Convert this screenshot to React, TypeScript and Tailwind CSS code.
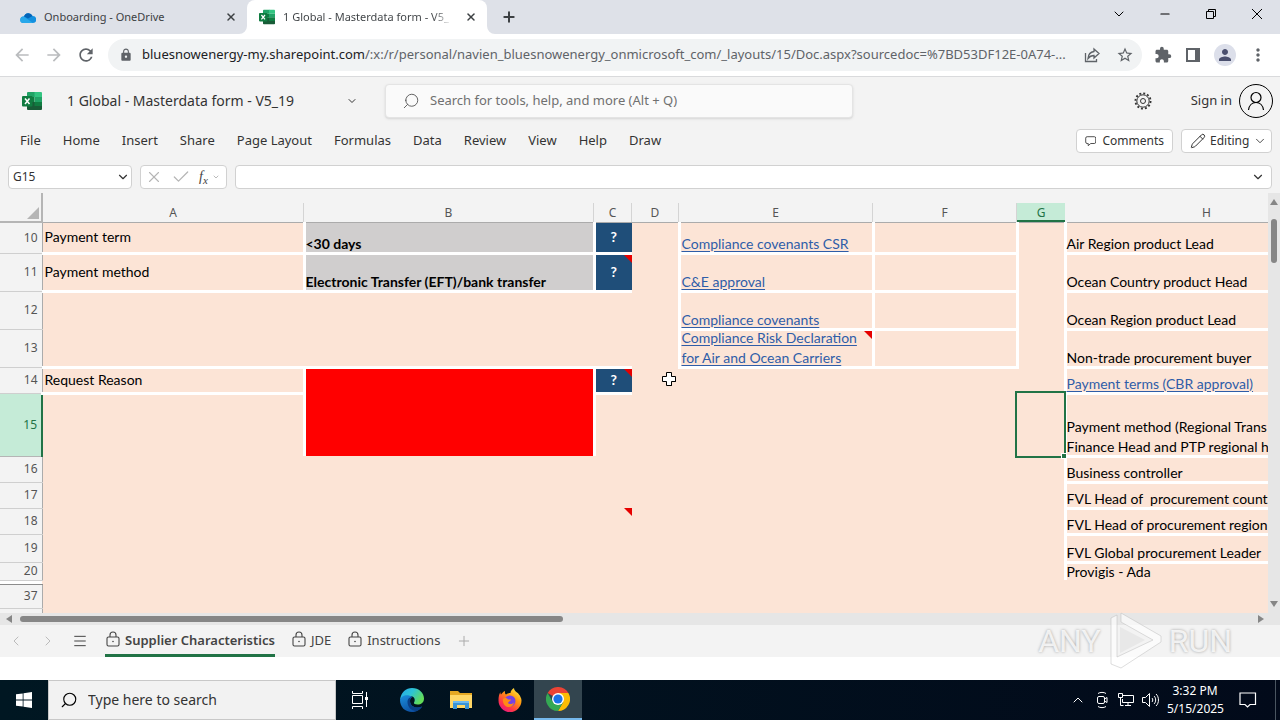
import React, { ReactNode } from "react";
import { ChevronDown, ChevronLeft, ChevronRight, ChevronUp, Menu, Minus, Plus, Search, X, Check, Pencil } from "lucide-react";
import { MdExtension, MdLock, MdMoreVert, MdStarBorder, MdRefresh, MdArrowBack, MdArrowForward, MdPerson } from "react-icons/md";

const ExcelLogo = ({ className }: { className?: string }) => (
  <svg viewBox="0 0 20 18" className={className} xmlns="http://www.w3.org/2000/svg">
    <path d="M6 0h7v5H5V1a1 1 0 0 1 1-1z" fill="#21a366" />
    <path d="M12.500 0H19a1 1 0 0 1 1 1v4h-7.500z" fill="#33c481" />
    <path d="M5 5h7.500v5H5z" fill="#107c41" />
    <path d="M12.500 5H20v5h-7.500z" fill="#21a366" />
    <path d="M5 10h15v7a1 1 0 0 1-1 1H6a1 1 0 0 1-1-1z" fill="#185c37" />
    <path d="M12.500 10H20v4h-7.500z" fill="#107c41" />
    <rect x="0" y="4" width="10.500" height="10.500" rx="1" fill="#107c41" />
    <path d="M3 6.500l4.500 5.500M7.500 6.500L3 12" stroke="#fff" strokeWidth="1.500" />
  </svg>
);

const CloudLogo = () => (
  <svg viewBox="0 0 16 11" className="h-[11px] w-4 shrink-0" xmlns="http://www.w3.org/2000/svg">
    <path d="M4 4.500A4.500 4.500 0 0 1 12.500 4 3.500 3.500 0 0 1 13 11H3.200A3.200 3.200 0 0 1 4 4.500z" fill="#1490df" />
    <path d="M4 4.500A4.500 4.500 0 0 1 12.500 4L8 6.500z" fill="#0364b8" />
    <path d="M3.800 4.500L13 10.900 3.200 11A3.200 3.200 0 0 1 3.800 4.500z" fill="#28a8ea" />
  </svg>
);

const GearIcon = () => (
  <svg viewBox="0 0 18 18" className="size-[18px]" fill="none" stroke="#333" xmlns="http://www.w3.org/2000/svg">
    <circle cx="9" cy="9" r="6.200" />
    <circle cx="9" cy="9" r="2.500" />
    <circle cx="9" cy="9" r="7.600" strokeWidth="1.800" strokeDasharray="1.980 2" />
  </svg>
);

const LockIcon = () => (
  <svg viewBox="0 0 16 16" className="mb-1 size-4" fill="none" stroke="#444" strokeWidth="1.100">
    <rect x="2" y="6" width="12" height="9" rx="1.500" />
    <path d="M5 6V4a3 3 0 0 1 6 0v2" />
    <circle cx="8" cy="10.500" r="0.800" fill="#444" stroke="none" />
  </svg>
);

const CommentIcon = () => (
  <svg viewBox="0 0 16 16" className="size-4" fill="none" stroke="#333" strokeWidth="1.200">
    <path d="M3 2h10a2 2 0 0 1 2 2v5.500a2 2 0 0 1-2 2H8l-3.500 3v-3H3a2 2 0 0 1-2-2V4a2 2 0 0 1 2-2z" />
  </svg>
);

function BrowserTabs() {
  return (
    <div className="flex h-[34px] bg-[#dee1e8] font-['Noto_Sans',sans-serif] text-[11px] text-[#3c4043]">
      <div className="flex w-[247px] items-center pr-2 pl-5">
        <CloudLogo />
        <span className="ml-2 flex-1">Onboarding - OneDrive</span>
        <button aria-label="Close tab" className="p-0.5"><X className="size-3" strokeWidth={3} /></button>
      </div>
      <div className="relative flex w-60 items-center rounded-t-lg bg-white pr-2 pl-3">
        <svg className="absolute bottom-0 -left-2 size-2" viewBox="0 0 8 8"><path d="M8 0v8H0a8 8 0 0 0 8-8z" fill="#fff" /></svg>
        <svg className="absolute -right-2 bottom-0 size-2" viewBox="0 0 8 8"><path d="M0 0v8h8a8 8 0 0 1-8-8z" fill="#fff" /></svg>
        <ExcelLogo className="h-4 w-4 shrink-0" />
        <span className="ml-2 bg-gradient-to-r from-[#3c4043] from-90% to-[#3c4043]/20 bg-clip-text whitespace-nowrap text-transparent">1 Global - Masterdata form - V5_</span>
        <button aria-label="Close tab" className="ml-auto p-0.5"><X className="size-3" strokeWidth={3} /></button>
      </div>
      <button aria-label="New tab" className="ml-2.5 px-1"><Plus className="size-4" strokeWidth={3} /></button>
      <div className="ml-auto flex items-center pb-1.5 text-black">
        <button aria-label="Search tabs" className="flex w-[46px] justify-center"><ChevronDown className="size-4" strokeWidth={1.5} /></button>
        <button aria-label="Minimize" className="flex w-[46px] justify-center"><Minus className="size-3.5" strokeWidth={2} /></button>
        <button aria-label="Restore" className="flex w-[46px] justify-center">
          <svg viewBox="0 0 10 10" className="size-2.5" fill="none" stroke="#000"><path d="M.5 2.500h7v7h-7zM2.500 2.500v-2h7v7h-2" /></svg>
        </button>
        <button aria-label="Close" className="flex w-[46px] justify-center">
          <svg viewBox="0 0 10 10" className="size-2.5" stroke="#000"><path d="M0 0l10 10M10 0L0 10" /></svg>
        </button>
      </div>
    </div>
  );
}

function AddressBar() {
  return (
    <div className="flex h-[43px] items-center border-b border-[#d9dadc] bg-white text-[#5f6368]">
      <div className="flex w-[108px] shrink-0 items-center gap-3 pl-3">
        <button aria-label="Back"><MdArrowBack className="size-5 text-[#babcbe]" /></button>
        <button aria-label="Forward"><MdArrowForward className="size-5 text-[#babcbe]" /></button>
        <button aria-label="Reload"><MdRefresh className="size-5" /></button>
      </div>
      <div className="flex h-8 min-w-0 flex-1 items-center rounded-full bg-[#f1f3f4] pr-2 pl-[11px]">
        <MdLock className="size-3.5 shrink-0" />
        <span className="ml-[9px] flex-1 overflow-hidden font-['Noto_Sans',sans-serif] text-[13px] text-ellipsis whitespace-nowrap">
          <span className="text-[#202124]">bluesnowenergy-my.sharepoint.com</span>/:x:/r/personal/navien_bluesnowenergy_onmicrosoft_com/_layouts/15/Doc.aspx?sourcedoc=%7BD53DF12E-0A74-...
        </span>
        <button aria-label="Share" className="mr-4">
          <svg viewBox="0 0 16 16" className="size-4" fill="none" stroke="#5f6368" strokeWidth="1.300">
            <path d="M1.500 6v8.500h11V12M10 2l5 4.500-5 4.500V8.500c-3 0-4.500 1-6 3 .3-4 2.500-6.500 6-7z" />
          </svg>
        </button>
        <button aria-label="Bookmark"><MdStarBorder className="size-[18px]" /></button>
      </div>
      <div className="flex shrink-0 items-center gap-3 pr-3 pl-3">
        <button aria-label="Extensions"><MdExtension className="size-[18px]" /></button>
        <button aria-label="Side panel" className="px-0.5">
          <svg viewBox="0 0 14 14" className="size-3.5"><path d="M0 0h14v14H0zM2 2v10h7V2z" fill="#5f6368" fillRule="evenodd" /></svg>
        </button>
        <button aria-label="Profile" className="flex size-[22px] items-center justify-center rounded-full bg-[#dcdfea] text-[#4a4f6e]"><MdPerson className="size-[18px]" /></button>
        <button aria-label="Menu"><MdMoreVert className="size-5" /></button>
      </div>
    </div>
  );
}

const MENUS = ["File", "Home", "Insert", "Share", "Page Layout", "Formulas", "Data", "Review", "View", "Help", "Draw"];

function ExcelHeader() {
  return (
    <header className="bg-[#f3f3f3] font-['Noto_Sans',sans-serif] text-[13px] text-[#333]">
      <div className="flex h-12 items-center pr-[7px] pl-[22px]">
        <div className="flex w-[363px] shrink-0 items-center">
          <ExcelLogo className="h-[18px] w-5" />
          <span className="ml-[25px] flex-1 text-sm">1 Global - Masterdata form - V5_19</span>
          <button aria-label="File details" className="mr-[23px] p-1"><ChevronDown className="size-3" strokeWidth={2} /></button>
        </div>
        <label className="flex h-[34px] w-[468px] items-center rounded border border-[#e4e4e4] bg-[#fafafa] pl-4 shadow-sm">
          <Search className="size-[18px] shrink-0 -scale-x-100 text-[#555]" strokeWidth={1.2} />
          <input aria-label="Search" placeholder="Search for tools, help, and more (Alt + Q)" className="ml-2.5 w-full bg-transparent outline-none placeholder:text-[#707070]" />
        </label>
        <button aria-label="Settings" className="ml-auto"><GearIcon /></button>
        <button className="ml-[39px] flex items-center gap-[7px]">
          Sign in
          <span className="flex size-[34px] items-center justify-center rounded-full border border-black">
            <svg viewBox="0 0 18 20" className="h-5 w-[18px]" fill="none" stroke="#000" strokeWidth="1.200">
              <circle cx="9" cy="6.500" r="5" />
              <path d="M1.500 19c.5-4.500 3.500-7.500 7.500-7.500s7 3 7.500 7.500" />
            </svg>
          </span>
        </button>
      </div>
      <div className="flex h-8 items-center pr-2 pl-5">
        <nav className="flex gap-[22px]">
          {MENUS.map((m) => (
            <button key={m} className="whitespace-nowrap">{m}</button>
          ))}
        </nav>
        <div className="ml-auto flex gap-2 text-xs">
          <button className="flex h-6 w-[97px] items-center gap-1.5 rounded border border-[#d1d1d1] bg-white px-2"><CommentIcon />Comments</button>
          <button className="flex h-6 w-[91px] items-center gap-1 rounded border border-[#d1d1d1] bg-white px-2"><Pencil className="size-4 shrink-0" strokeWidth={1.5} />Editing<ChevronDown className="size-3.5 shrink-0" strokeWidth={1.5} /></button>
        </div>
      </div>
      <div className="flex h-9 gap-2 px-2 pt-2 pb-1 text-xs">
        <div className="flex w-[124px] items-center rounded border border-[#d1d1d1] bg-white pr-px pl-1">
          <input aria-label="Name box" defaultValue="G15" className="w-0 flex-1 outline-none" />
          <button aria-label="Names"><ChevronDown className="size-3.5" strokeWidth={2} /></button>
        </div>
        <div className="flex w-[87px] items-center rounded border border-[#d1d1d1] bg-white pl-1 text-[#b5b5b5]">
          <button aria-label="Cancel"><X className="size-[18px]" strokeWidth={1.5} /></button>
          <button aria-label="Enter" className="ml-2"><Check className="size-5" strokeWidth={1.5} /></button>
          <button aria-label="Insert function" className="ml-2 flex items-center font-['Liberation_Serif',serif] text-sm text-[#444] italic">
            f<sub className="text-[11px]">x</sub><ChevronDown className="ml-1 size-2 text-[#999]" />
          </button>
        </div>
        <div className="flex flex-1 items-center rounded border border-[#d1d1d1] bg-white pr-1.5">
          <input aria-label="Formula bar" className="flex-1 px-2 outline-none" />
          <button aria-label="Expand formula bar"><ChevronDown className="size-3.5" strokeWidth={2} /></button>
        </div>
      </div>
    </header>
  );
}

// Corner triangle shown on cells that carry a comment
const Note = () => (
  <svg className="absolute top-0 right-0 size-2" viewBox="0 0 8 8"><path d="M0 0h8v8z" fill="#e60000" /></svg>
);

const Help = ({ note = false }: { note?: boolean }) => (
  <td className="relative border-b-3 border-white bg-[#1f4e79] text-center align-middle font-bold text-white">?{note && <Note />}</td>
);

const RowHead = ({ n, active = false }: { n: string; active?: boolean }) => (
  <th
    scope="row"
    className={
      active
        ? "border-r-2 border-b border-r-[#217346] border-b-[#b5b5b5] bg-[#c5ebd7] pr-1 text-right font-['Noto_Sans',sans-serif] text-xs font-normal text-[#217346]"
        : "border-r border-b border-r-[#ababab] border-b-[#cfcfcf] bg-[#f3f3f3] pr-1 text-right font-['Noto_Sans',sans-serif] text-xs font-normal text-[#555]"
    }
  >
    {n}
  </th>
);

const Label = ({ children }: { children: ReactNode }) => (
  <td className="border-r-3 border-b-3 border-white pl-0.5 align-middle">{children}</td>
);

const Value = ({ children }: { children: ReactNode }) => (
  <td className="border-r-3 border-b-3 border-white bg-[#d0cece] align-bottom font-bold">
    <div className="-mb-0.5">{children}</div>
  </td>
);

const LinkCell = ({ children, note = false }: { children: ReactNode; note?: boolean }) => (
  <td className="relative border-x-3 border-b-3 border-white pl-px align-bottom">
    <a href="#" className="-mt-1 -mb-0.5 block text-[#2f5da8] underline underline-offset-2">{children}</a>
    {note && <Note />}
  </td>
);

const Approver = ({ children }: { children: ReactNode }) => (
  <td className="border-b-3 border-l-3 border-white align-bottom">
    <div className="-mb-0.5 whitespace-nowrap">{children}</div>
  </td>
);

const Blank = () => <td className="border-r-3 border-b-3 border-white" />;

const COLS = ["A", "B", "C", "D", "E", "F", "G", "H"];

function Sheet() {
  return (
    <div className="min-w-0 flex-1 overflow-hidden bg-[#fce4d6]">
      <table className="w-[1349px] table-fixed border-collapse font-[Lato,sans-serif] text-sm leading-5 text-black">
        <colgroup>
          <col className="w-[42px]" />
          <col className="w-[262px]" />
          <col className="w-[290px]" />
          <col className="w-[38px]" />
          <col className="w-[47px]" />
          <col className="w-[194px]" />
          <col className="w-[144px]" />
          <col className="w-12" />
          <col className="w-[284px]" />
        </colgroup>
        <thead>
          <tr className="h-[29px] bg-[#f3f3f3]">
            <th className="border-r-2 border-b-2 border-[#b5b5b5] p-0 align-bottom">
              <svg className="mr-0.5 mb-0.5 ml-auto size-3" viewBox="0 0 12 12"><path d="M12 0v12H0z" fill="#b5b5b5" /></svg>
            </th>
            {COLS.map((c) => (
              <th key={c} scope="col" className="border-b border-[#ababab] p-0 align-bottom font-['Noto_Sans',sans-serif] text-xs font-normal text-[#555]">
                <div className={c === "G" ? "h-[19px] border-b-2 border-[#217346] bg-[#c5ebd7] leading-[19px] text-[#217346]" : "h-[19px] border-r border-[#d4d4d4] leading-[19px]"}>{c}</div>
              </th>
            ))}
          </tr>
        </thead>
        <tbody>
          <tr className="h-[31px]">
            <RowHead n="10" />
            <Label>Payment term</Label>
            <Value>&lt;30 days</Value>
            <Help />
            <td />
            <LinkCell>Compliance covenants CSR</LinkCell>
            <Blank />
            <td />
            <Approver>Air Region product Lead</Approver>
          </tr>
          <tr className="h-[38px]">
            <RowHead n="11" />
            <Label>Payment method</Label>
            <Value>Electronic Transfer (EFT)/bank transfer</Value>
            <Help note />
            <td />
            <LinkCell>C&amp;E approval</LinkCell>
            <Blank />
            <td />
            <Approver>Ocean Country product Head</Approver>
          </tr>
          <tr className="h-[38px]">
            <RowHead n="12" />
            <td colSpan={3} />
            <td />
            <LinkCell>Compliance covenants</LinkCell>
            <Blank />
            <td />
            <Approver>Ocean Region product Lead</Approver>
          </tr>
          <tr className="h-[38px]">
            <RowHead n="13" />
            <td colSpan={3} className="border-b-3 border-white" />
            <td />
            <LinkCell note>Compliance Risk Declaration<br />for Air and Ocean Carriers</LinkCell>
            <Blank />
            <td />
            <Approver>Non-trade procurement buyer</Approver>
          </tr>
          <tr className="h-[26px]">
            <RowHead n="14" />
            <Label>Request Reason</Label>
            <td rowSpan={2} className="border-r-3 border-white bg-[#ff0000]" />
            <Help note />
            <td className="relative">
              <svg className="absolute top-1 right-0.5 size-4" viewBox="0 0 16 16">
                <path d="M6 2h5v4h4v5h-4v4H6v-4H2V6h4z" fill="#000" />
                <path d="M5.500 1.500h5v4h4v5h-4v4h-5v-4h-4v-5h4z" fill="#fff" stroke="#000" />
              </svg>
            </td>
            <td colSpan={2} />
            <td />
            <Approver><a href="#" className="text-[#2f5da8] underline underline-offset-2">Payment terms (CBR approval)</a></Approver>
          </tr>
          <tr className="h-[63px]">
            <RowHead n="15" active />
            <td className="border-r-3 border-white" />
            <td />
            <td />
            <td colSpan={2} />
            <td className="relative">
              <div className="absolute -inset-x-0.5 -inset-y-0.5 z-10 border-2 border-[#217346]">
                <span className="absolute -right-[3px] -bottom-[3px] size-1.5 border border-white bg-[#217346]" />
              </div>
            </td>
            <Approver>Payment method (Regional Trans<br />Finance Head and PTP regional h</Approver>
          </tr>
          <tr className="h-[26px]">
            <RowHead n="16" />
            <td colSpan={7} />
            <Approver>Business controller</Approver>
          </tr>
          <tr className="h-[26px]">
            <RowHead n="17" />
            <td colSpan={7} />
            <Approver>FVL Head of&nbsp; procurement countr</Approver>
          </tr>
          <tr className="h-[26px]">
            <RowHead n="18" />
            <td colSpan={2} />
            <td className="relative"><Note /></td>
            <td colSpan={4} />
            <Approver>FVL Head of procurement region</Approver>
          </tr>
          <tr className="h-7">
            <RowHead n="19" />
            <td colSpan={7} />
            <Approver>FVL Global procurement Leader</Approver>
          </tr>
          <tr className="h-[18px] leading-4">
            <RowHead n="20" />
            <td colSpan={7} />
            <td className="border-l-3 border-white">Provigis - Ada</td>
          </tr>
          {/* hidden rows 21-36 */}
          <tr className="h-1">
            <th className="border-y border-[#8c8c8c] bg-white p-0" />
            <td colSpan={8} />
          </tr>
          <tr className="h-6">
            <RowHead n="37" />
            <td colSpan={8} />
          </tr>
          <tr className="h-5">
            <RowHead n="" />
            <td colSpan={8} />
          </tr>
        </tbody>
      </table>
    </div>
  );
}

function SheetTabs() {
  return (
    <footer className="flex h-8 items-center bg-[#f3f3f3] pl-2 font-['Noto_Sans',sans-serif] text-[13px] text-[#444]">
      <button aria-label="Previous sheet" className="w-8 text-[#bbb]"><ChevronLeft className="size-4" strokeWidth={1.5} /></button>
      <button aria-label="Next sheet" className="w-8 text-[#bbb]"><ChevronRight className="size-4" strokeWidth={1.5} /></button>
      <button aria-label="All sheets" className="w-[33px]"><Menu className="size-4" strokeWidth={1.5} /></button>
      <button className="flex h-8 items-center gap-1 border-b-3 border-[#217346] pt-0.5 font-semibold"><LockIcon />Supplier Characteristics</button>
      <button className="ml-4 flex items-center gap-1"><LockIcon />JDE</button>
      <button className="ml-4 flex items-center gap-1"><LockIcon />Instructions</button>
      <button aria-label="New sheet" className="ml-4"><Plus className="size-4 text-[#aaa]" strokeWidth={1.5} /></button>
    </footer>
  );
}

const EdgeLogo = () => (
  <svg viewBox="0 0 24 24" className="size-6" xmlns="http://www.w3.org/2000/svg">
    <defs>
      <linearGradient id="edgeTop" x1="0" y1="0" x2="1" y2="0.500"><stop offset="0" stopColor="#28a8e8" /><stop offset="0.500" stopColor="#2cc3d6" /><stop offset="1" stopColor="#63dc58" /></linearGradient>
      <linearGradient id="edgeLow" x1="0" y1="0" x2="0.600" y2="1"><stop offset="0" stopColor="#1b8fdd" /><stop offset="1" stopColor="#0c4ea0" /></linearGradient>
    </defs>
    <path d="M0 12C1 4 6 0 12 0c7 0 12 5 12 10.500 0 4-3 6-6.500 6-2.500 0-4-1-3.500-2 1.500-2 1-6.500-4-6.500C5 8 1 10 0 12z" fill="url(#edgeTop)" />
    <path d="M0 12c0 7 5 12 12 12 4 0 8-2 10-5.500-5 2.500-12 .5-12-5.500 0-2 1-3.500 2.500-4C7 5.500 1 8 0 12z" fill="url(#edgeLow)" />
    <path d="M7.500 14c0 5 4 9 9 9 2.500-1 4.500-2.500 5.500-4.500-6 2.500-12 0-12-5.500 0-2 1-3.500 2-4-3 0-4.500 2.500-4.500 5z" fill="#0a3f86" />
  </svg>
);

const ExplorerLogo = () => (
  <svg viewBox="0 0 22 20" className="h-5 w-[22px]" xmlns="http://www.w3.org/2000/svg">
    <path d="M0 1h8l2 2h12v15H0z" fill="#e5a823" />
    <path d="M0 5h22v13H0z" fill="#ffd766" />
    <path d="M3 11h16v8h-4v-4H7v4H3z" fill="#3a94d6" />
    <path d="M3 11h16v2H3z" fill="#6dbaf0" />
  </svg>
);

const FirefoxLogo = () => (
  <svg viewBox="0 0 24 24" className="size-6" xmlns="http://www.w3.org/2000/svg">
    <defs>
      <linearGradient id="fox" x1="0.900" y1="0" x2="0.200" y2="1"><stop offset="0" stopColor="#fff44f" /><stop offset="0.400" stopColor="#ff980e" /><stop offset="0.750" stopColor="#ff3647" /><stop offset="1" stopColor="#e31587" /></linearGradient>
    </defs>
    <path d="M22.500 9c-.8-2-2-3.500-3.500-4.500-2-1.500-3-3-3-4.500-2 1-3.500 3-3.500 5-2 0-3.500.5-4.500 1.500C7 6 6.800 4.500 7 3 5.500 3.500 4 5 3 6.500 2.500 6 2.300 5 2.500 4 1 6 .5 9 .5 12.500a11.500 11.500 0 0 0 23 0c0-1.200-.3-2.500-1-3.500z" fill="url(#fox)" />
    <circle cx="12" cy="13" r="5.500" fill="#7542e5" />
    <path d="M5 11c2-1.500 4-1 5 .5h3c-.5 2-3 2-3 3.500 1 1.500 4 1.500 6-.5-.5 3-3 5-6 4.500-3.500-.5-5.500-4-5-8z" fill="#ff8a16" />
  </svg>
);

const ChromeLogo = () => (
  <svg viewBox="0 0 24 24" className="size-6" xmlns="http://www.w3.org/2000/svg">
    <path d="M12 12L1.600 6A12 12 0 0 1 22.400 6z" fill="#ea4335" />
    <path d="M12 12V6h10.400A12 12 0 0 1 12 24l5.200-9z" fill="#fbbc04" />
    <path d="M1.600 6A12 12 0 0 0 12 24l5.200-9H6.800z" fill="#34a853" />
    <circle cx="12" cy="12" r="6" fill="#fff" />
    <circle cx="12" cy="12" r="4.600" fill="#1a73e8" />
  </svg>
);

function Taskbar() {
  return (
    <div className="flex h-10 shrink-0 items-center bg-gradient-to-r from-[#001722] to-[#020a1a] font-['Noto_Sans',sans-serif] text-white">
      <button aria-label="Start" className="flex w-12 justify-center">
        <svg viewBox="0 0 16 16" className="size-4"><path d="M0 2.300L6.700 1.400v6.200H0zM7.500 1.300L16 0v7.600H7.500zM0 8.400h6.700v6.200L0 13.700zM7.500 8.400H16V16l-8.500-1.200z" fill="#fff" /></svg>
      </button>
      <label className="flex h-10 w-72 items-center border border-[#c8c8c8] bg-[#f2f2f2] pl-[11px] text-black">
        <Search className="size-[18px] shrink-0 -scale-x-100" strokeWidth={1.5} />
        <input aria-label="Type here to search" placeholder="Type here to search" className="ml-2.5 w-full bg-transparent text-sm outline-none placeholder:text-[#333]" />
      </label>
      <button aria-label="Task view" className="flex w-12 justify-center">
        <svg viewBox="0 0 18 18" className="size-[18px]" fill="none" stroke="#fff"><path d="M1.500 4.500h10v8h-10zM1.500 0v2.500h10V0M1.500 18v-2.500h10V18M15.500 1v15" /><path d="M14 6h3v3h-3z" fill="#fff" stroke="none" /></svg>
      </button>
      <button aria-label="Edge" className="ml-[3px] flex w-[49px] justify-center"><EdgeLogo /></button>
      <button aria-label="File Explorer" className="flex w-[49px] justify-center"><ExplorerLogo /></button>
      <button aria-label="Firefox" className="flex w-[49px] justify-center"><FirefoxLogo /></button>
      <button aria-label="Chrome" className="flex h-10 w-12 items-center justify-center border-b-2 border-[#76b9ed] bg-[#33454f]"><ChromeLogo /></button>
      <div className="ml-auto flex items-center gap-2">
        <ChevronUp className="size-4" strokeWidth={1.5} />
        <svg viewBox="0 0 16 18" className="h-[18px] w-4" fill="none" stroke="#fff"><rect x="3.500" y="5.500" width="7" height="7" rx="1.500" /><path d="M10.500 8l2.500-1.500v5L10.500 10M4 2.500c2-1.500 6-1.500 8 0M4 15.500c2 1.500 6 1.500 8 0" /></svg>
        <svg viewBox="0 0 16 14" className="h-3.5 w-4" fill="none" stroke="#fff"><path d="M5 2.500h10.500v7H4.500V6M10 9.500v3M7 12.500h6M.5.500h4v4h-4zM2.500 4.500v8h3" /></svg>
        <svg viewBox="0 0 17 14" className="h-3.5 w-[17px]" fill="none" stroke="#fff"><path d="M.5 4.500h3l4-4v13l-4-4h-3zM10 5c1 1 1 3 0 4M12 3c2.200 2 2.200 6 0 8M14 1c3.300 3 3.300 9 0 12" /></svg>
        <div className="w-14 text-center text-xs leading-[18px]">3:32 PM<br />5/15/2025</div>
        <svg viewBox="0 0 18 18" className="ml-2 size-[18px]" fill="none" stroke="#fff" strokeWidth="1.200"><path d="M1 2h15.500v11.500H11L8.500 16 6 13.500H1z" /></svg>
        <span className="mr-1 ml-2.5 h-10 w-px bg-[#4a5560]" />
      </div>
    </div>
  );
}

const Watermark = () => (
  <div className="pointer-events-none absolute right-12 bottom-12 z-20 flex items-center gap-1.5 font-[Roboto,sans-serif] text-[32px] text-white/80 [text-shadow:0_0_3px_rgba(0,0,0,0.350)]">
    ANY
    <svg viewBox="0 0 56 62" className="h-[62px] w-14" fill="none">
      <path d="M4 54V8l6-3v42l36-17-32-18V3l40 23v6L14 58z" fill="#fff" fillOpacity="0.650" stroke="#bbb" strokeOpacity="0.500" />
      <path d="M13 17v26l25-13z" fill="#ddd" fillOpacity="0.500" />
    </svg>
    RUN
  </div>
);

export default function App() {
  return (
    <div className="relative flex h-screen flex-col overflow-hidden bg-white">
      <BrowserTabs />
      <AddressBar />
      <ExcelHeader />
      <main className="flex min-h-0 flex-1">
        <Sheet />
        <div className="flex w-3 flex-col items-center justify-between bg-[#e6e6e6] py-1.5">
          <svg viewBox="0 0 8 6" className="h-1.5 w-2"><path d="M4 0l4 6H0z" fill="#868686" /></svg>
          <div className="mt-3.5 mb-auto h-11 w-1.5 rounded-full bg-[#868686]" />
          <svg viewBox="0 0 8 6" className="h-1.5 w-2"><path d="M4 6l4-6H0z" fill="#868686" /></svg>
        </div>
      </main>
      <div className="flex h-3 items-center bg-[#e6e6e6] pr-4 pl-1.5">
        <svg viewBox="0 0 6 8" className="h-2 w-1.5"><path d="M0 4l6-4v8z" fill="#868686" /></svg>
        <div className="ml-2 h-1.5 w-[543px] rounded-full bg-[#868686]" />
        <svg viewBox="0 0 6 8" className="ml-auto h-2 w-1.5"><path d="M6 4L0 0v8z" fill="#868686" /></svg>
      </div>
      <SheetTabs />
      <div className="h-[23px] shrink-0" />
      <Taskbar />
      <Watermark />
    </div>
  );
}
